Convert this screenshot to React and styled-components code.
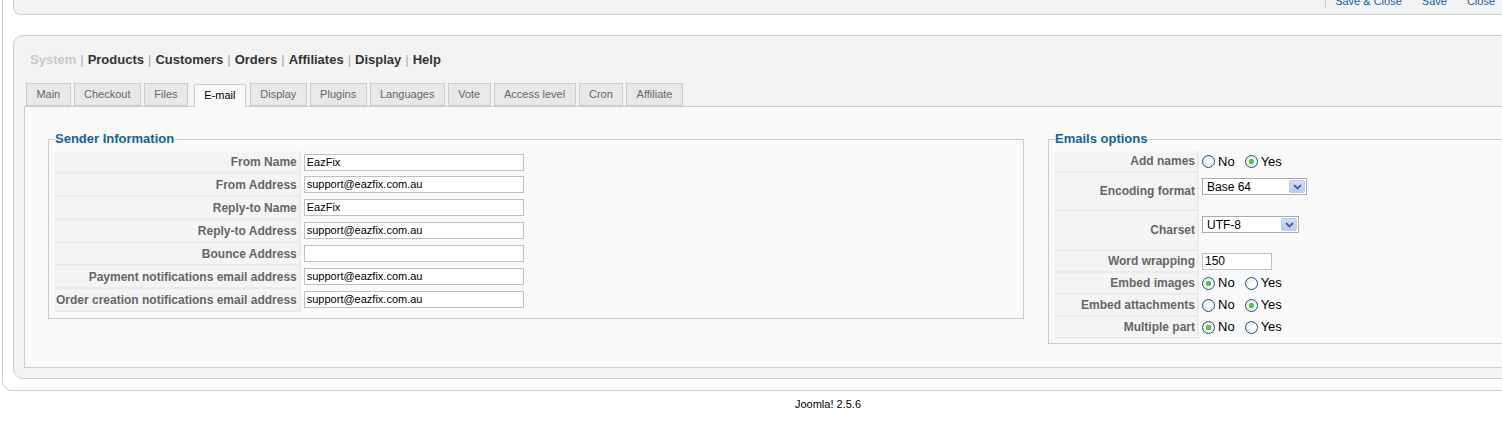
import React from 'react';
import styled, { createGlobalStyle } from 'styled-components';

const GlobalStyle = createGlobalStyle`
  html, body {
    margin: 0;
    padding: 0;
    background: #fff;
    overflow: hidden;
  }
  body {
    font-family: "Liberation Sans", Arial, sans-serif;
    font-size: 11px;
    color: #333;
  }
`;

const Page = styled.div`
  width: 1656px;
  margin-top: -30px;
`;

const Outer = styled.div`
  margin: 0 2px;
  border: 1px solid #ccc;
  border-radius: 0 0 10px 10px;
  padding: 0 10px 11px 10px;
  background: #fff;
`;

const Toolbar = styled.div`
  height: 43px;
  border: 1px solid #ccc;
  border-top: none;
  border-radius: 0 0 8px 8px;
  background: #f3f3f3;
  display: flex;
  justify-content: flex-end;
  padding-right: 147px;
`;

const ToolGroup = styled.div`
  display: flex;
  align-items: flex-end;
  gap: 20px;
  border-left: 1px solid #ccc;
  padding-left: 9px;
  margin-bottom: 6px;
`;

const ToolLink = styled.a`
  font-size: 11px;
  line-height: 14px;
  color: #1b5e94;
  text-decoration: none;
`;

const Panel = styled.div`
  margin-top: 20px;
  border: 1px solid #ccc;
  border-radius: 10px;
  background: #f3f3f3;
  padding: 15px 10px 10px 10px;
`;

const Menu = styled.div`
  display: flex;
  align-items: center;
  padding-left: 6px;
  font-size: 13px;
  line-height: 18px;
  font-weight: bold;
  margin-bottom: 14px;
`;

const MenuItem = styled.span`
  color: ${p => (p.$disabled ? '#c9c9c9' : '#333')};
`;

const MenuSep = styled.span`
  color: #aaa;
  font-weight: normal;
  margin: 0 4px;
`;

const Tabs = styled.div`
  display: flex;
  align-items: flex-end;
  gap: 3px;
  padding-left: 2px;
`;

const Tab = styled.div`
  position: relative;
  z-index: ${p => (p.$active ? 1 : 0)};
  height: ${p => (p.$active ? 22 : 21)}px;
  line-height: 21px;
  padding: 0 9.4px;
  margin: 0 ${p => (p.$active ? 1 : 0)}px -${p => (p.$active ? 1 : 0)}px ${p => (p.$active ? 3 : 0)}px;
  border: 1px solid #ccc;
  border-bottom: ${p => (p.$active ? 'none' : '1px solid #ccc')};
  background: ${p => (p.$active ? '#f9f9f9' : '#e8e8e8')};
  color: ${p => (p.$active ? '#000' : '#666')};
  font-size: 11px;
  white-space: nowrap;
`;

const Content = styled.div`
  border: 1px solid #ccc;
  background: #f9f9f9;
  padding: 24px 23px 23px 23px;
  display: flex;
  gap: 24px;
  align-items: flex-start;
`;

const Fieldset = styled.fieldset`
  margin: 0;
  width: ${p => p.$width}px;
  box-sizing: border-box;
  border: 1px solid #ccc;
  padding: ${p => p.$top}px 6px ${p => p.$bottom}px 6px;
  min-width: 0;
`;

const Legend = styled.legend`
  padding: 0;
  font-size: 13px;
  line-height: 16px;
  font-weight: bold;
  color: #146295;
`;

const Table = styled.table`
  border-collapse: collapse;
  border-spacing: 0;
`;

const Key = styled.td`
  background: #f4f4f4;
  border-bottom: 2px solid #ebebeb;
  border-right: 2px solid #ebebeb;
  color: #666;
  font-weight: bold;
  font-size: 12px;
  text-align: right;
  white-space: nowrap;
  padding: 0 2px 0 1px;
  width: ${p => (p.$width ? `${p.$width}px` : 'auto')};
  height: ${p => p.$h || 21}px;
  vertical-align: middle;
`;

const Value = styled.td`
  padding: ${p => (p.$top ? '6px 0 0 3px' : '0 0 0 3px')};
  vertical-align: ${p => (p.$top ? 'top' : 'middle')};
  white-space: nowrap;
`;

const TextInput = styled.div`
  box-sizing: border-box;
  width: ${p => p.$width}px;
  height: 17px;
  border: 1px solid #bfbfbf;
  background: #fff;
  color: #000;
  font-size: ${p => (p.$big ? 12 : 11)}px;
  line-height: 15px;
  padding: 0 2px;
`;

const Select = styled.div`
  box-sizing: border-box;
  width: ${p => p.$width}px;
  height: 17px;
  border: 1px solid #a5acb2;
  background: #fff;
  display: flex;
  align-items: center;
  justify-content: space-between;
  padding: 0 1px 0 4px;
  font-size: 12px;
  color: #000;
`;

const SelectButton = styled.span`
  box-sizing: border-box;
  width: 16px;
  height: 13px;
  border: 1px solid #b9cbf6;
  border-radius: 2px;
  background: linear-gradient(#d2defc, #b6c9f7);
  display: flex;
  align-items: center;
  justify-content: center;
`;

const RadioGroup = styled.div`
  display: flex;
  align-items: center;
  font-size: 13px;
  color: #000;
  line-height: 16px;
`;

const RadioItem = styled.label`
  display: flex;
  align-items: center;
  margin-right: ${p => (p.$first ? 10 : 0)}px;
`;

const Radio = styled.span`
  box-sizing: border-box;
  width: 13px;
  height: 13px;
  border-radius: 50%;
  border: 1px solid #1c5180;
  background: radial-gradient(circle at 65% 65%, #fff 20%, #dcdcd7 100%);
  margin-right: 3px;
  display: flex;
  align-items: center;
  justify-content: center;
  &::after {
    content: '';
    display: ${p => (p.$checked ? 'block' : 'none')};
    width: 5px;
    height: 5px;
    border-radius: 50%;
    background: radial-gradient(circle, #5fd35f, #21a121);
  }
`;

const Footer = styled.div`
  text-align: center;
  color: #000;
  font-size: 11px;
  line-height: 14px;
  margin-top: 6px;
`;

const tabs = ['Main', 'Checkout', 'Files', 'E-mail', 'Display', 'Plugins', 'Languages', 'Vote', 'Access level', 'Cron', 'Affiliate'];
const menu = ['System', 'Products', 'Customers', 'Orders', 'Affiliates', 'Display', 'Help'];

const senderRows = [
  ['From Name', 'EazFix'],
  ['From Address', 'support@eazfix.com.au'],
  ['Reply-to Name', 'EazFix'],
  ['Reply-to Address', 'support@eazfix.com.au'],
  ['Bounce Address', ''],
  ['Payment notifications email address', 'support@eazfix.com.au'],
  ['Order creation notifications email address', 'support@eazfix.com.au'],
];

function Chevron() {
  return (
    <svg width="9" height="6" viewBox="0 0 9 6">
      <path d="M1 1 L4.5 4.5 L8 1" fill="none" stroke="#4d6185" strokeWidth="1.8" />
    </svg>
  );
}

function YesNo({ yes }) {
  return (
    <RadioGroup>
      <RadioItem $first>
        <Radio $checked={!yes} />
        No
      </RadioItem>
      <RadioItem>
        <Radio $checked={yes} />
        Yes
      </RadioItem>
    </RadioGroup>
  );
}

export default function App() {
  return (
    <Page>
      <GlobalStyle />
      <Outer>
        <Toolbar>
          <ToolGroup>
            <ToolLink>Save &amp; Close</ToolLink>
            <ToolLink>Save</ToolLink>
            <ToolLink>Close</ToolLink>
          </ToolGroup>
        </Toolbar>
        <Panel>
          <Menu>
            {menu.map((m, i) => (
              <React.Fragment key={m}>
                {i > 0 && <MenuSep>|</MenuSep>}
                <MenuItem $disabled={i === 0}>{m}</MenuItem>
              </React.Fragment>
            ))}
          </Menu>
          <Tabs>
            {tabs.map(t => (
              <Tab key={t} $active={t === 'E-mail'}>
                {t}
              </Tab>
            ))}
          </Tabs>
          <Content>
            <Fieldset $width={976} $top={4} $bottom={6}>
              <Legend>Sender Information</Legend>
              <Table>
                <tbody>
                  {senderRows.map(([k, v]) => (
                    <tr key={k}>
                      <Key>{k}</Key>
                      <Value>
                        <TextInput $width={220}>{v}</TextInput>
                      </Value>
                    </tr>
                  ))}
                </tbody>
              </Table>
            </Fieldset>
            <Fieldset $width={560} $top={4} $bottom={4}>
              <Legend>Emails options</Legend>
              <Table>
                <tbody>
                  <tr>
                    <Key $width={139} $h={20}>Add names</Key>
                    <Value>
                      <YesNo yes />
                    </Value>
                  </tr>
                  <tr>
                    <Key $h={36}>Encoding format</Key>
                    <Value $top>
                      <Select $width={105}>
                        Base 64
                        <SelectButton>
                          <Chevron />
                        </SelectButton>
                      </Select>
                    </Value>
                  </tr>
                  <tr>
                    <Key $h={38}>Charset</Key>
                    <Value $top>
                      <Select $width={97}>
                        UTF-8
                        <SelectButton>
                          <Chevron />
                        </SelectButton>
                      </Select>
                    </Value>
                  </tr>
                  <tr>
                    <Key $h={20}>Word wrapping</Key>
                    <Value>
                      <TextInput $width={70} $big>150</TextInput>
                    </Value>
                  </tr>
                  <tr>
                    <Key $h={20}>Embed images</Key>
                    <Value>
                      <YesNo />
                    </Value>
                  </tr>
                  <tr>
                    <Key $h={20}>Embed attachments</Key>
                    <Value>
                      <YesNo yes />
                    </Value>
                  </tr>
                  <tr>
                    <Key $h={20}>Multiple part</Key>
                    <Value>
                      <YesNo />
                    </Value>
                  </tr>
                </tbody>
              </Table>
            </Fieldset>
          </Content>
        </Panel>
      </Outer>
      <Footer>Joomla! 2.5.6</Footer>
    </Page>
  );
}
